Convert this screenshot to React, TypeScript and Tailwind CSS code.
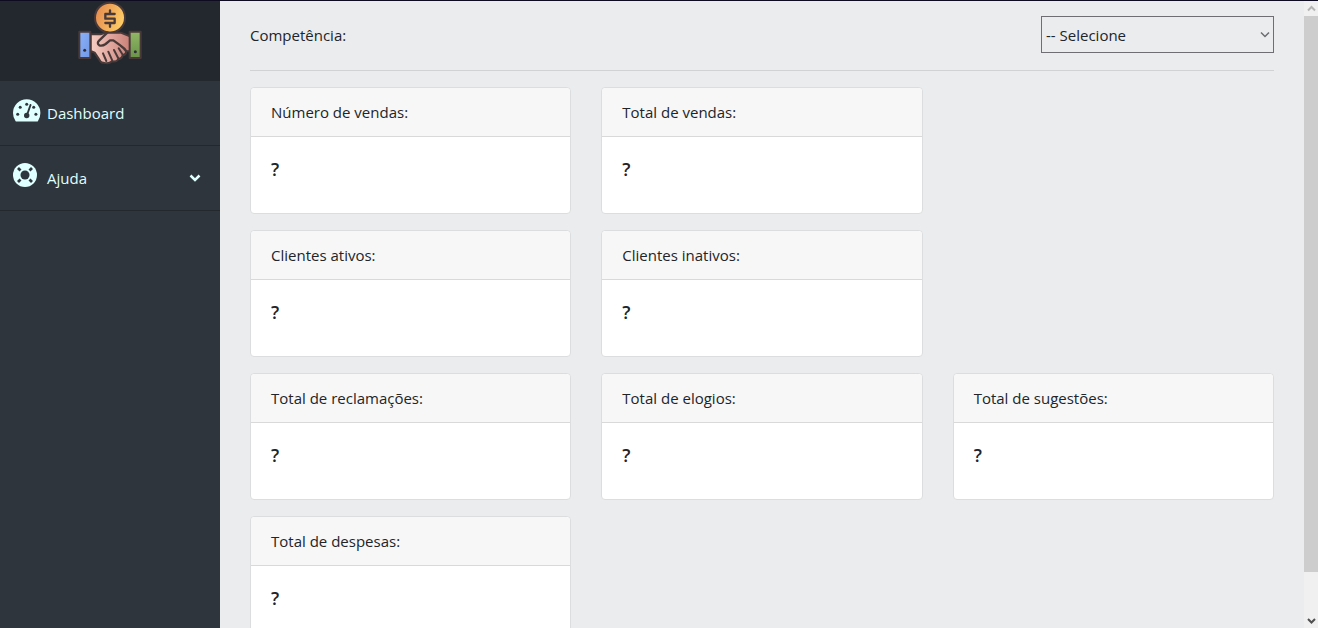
import React from "react";

const cards = [
  { title: "Número de vendas:", place: "col-start-1" },
  { title: "Total de vendas:", place: "col-start-2" },
  { title: "Clientes ativos:", place: "col-start-1" },
  { title: "Clientes inativos:", place: "col-start-2" },
  { title: "Total de reclamações:", place: "col-start-1" },
  { title: "Total de elogios:", place: "col-start-2" },
  { title: "Total de sugestões:", place: "col-start-3" },
  { title: "Total de despesas:", place: "col-start-1" },
];

function Logo() {
  return (
    <svg width="64" height="64" viewBox="6 3 192 192" role="img" aria-label="Vendas" stroke="#493a39" strokeWidth="6" strokeLinecap="round" strokeLinejoin="round">
      <defs>
        <linearGradient id="coin" x1="0" y1="0.3" x2="1" y2="0.7">
          <stop offset="0" stopColor="#e58b50" />
          <stop offset="1" stopColor="#ffd167" />
        </linearGradient>
        <linearGradient id="skin" x1="0" y1="0" x2="1" y2="0">
          <stop offset="0" stopColor="#f8cec5" />
          <stop offset="1" stopColor="#c98078" />
        </linearGradient>
        <linearGradient id="blue" x1="0" y1="0" x2="1" y2="1">
          <stop offset="0" stopColor="#8eb2fa" />
          <stop offset="1" stopColor="#6f97e6" />
        </linearGradient>
        <linearGradient id="green" x1="0" y1="0" x2="0" y2="1">
          <stop offset="0" stopColor="#91b866" />
          <stop offset="1" stopColor="#6a9349" />
        </linearGradient>
      </defs>
      <circle cx="102" cy="53" r="45" fill="url(#coin)" />
      <path d="M116 42H88V56H116V69H88M102 31V40M102 71V80" fill="none" strokeWidth="7" />
      <path d="M44 103H74L90 98H134L162 109V154H151Q150 165 140 166Q138 176 127 178Q120 187 108 184Q98 193 82 188Q74 189 70 179L56 158L44 153Z" fill="url(#skin)" />
      <path d="M94 98L70 121Q61 130 70 136Q79 139 89 132L102 121H112L134 137Q146 145 151 154" fill="none" strokeWidth="7" />
      <path d="M81 160L91 183M97 155L109 182M114 150L128 177M128 145L140 164" fill="none" />
      <rect x="10" y="95" width="33" height="79" fill="url(#blue)" />
      <rect x="161" y="95" width="33" height="79" fill="url(#green)" />
      <circle cx="26" cy="151" r="4.5" fill="#302e3b" stroke="none" />
      <circle cx="178" cy="155" r="4.5" fill="#302e3b" stroke="none" />
    </svg>
  );
}

function GaugeIcon() {
  return (
    <svg width="28" height="24" viewBox="0 0 28 24" aria-hidden="true">
      <path d="M2.500 22Q0 18.500 0 14A13.700 13.700 0 0 1 27.400 14Q27.400 18.500 25 22Q24.700 22.500 24 22.500H3.500Q2.800 22.500 2.500 22Z" fill="currentColor" />
      <g fill="#2f353d">
        <circle cx="4.700" cy="15.300" r="1.500" />
        <circle cx="7.200" cy="8.200" r="1.500" />
        <circle cx="13.700" cy="5.200" r="1.500" />
        <circle cx="20.700" cy="8.200" r="1.500" />
        <circle cx="22.900" cy="15.300" r="1.500" />
        <circle cx="13.700" cy="16.500" r="2.700" />
      </g>
      <path d="M17.500 6L14 16" stroke="#2f353d" strokeWidth="1.900" strokeLinecap="round" />
    </svg>
  );
}

function LifeRingIcon() {
  return (
    <svg width="24" height="24" viewBox="0 0 24 24" aria-hidden="true">
      <circle cx="12" cy="12" r="12" fill="currentColor" />
      <circle cx="12" cy="12" r="4.500" fill="#2f353d" />
      <path d="M5 5L7.500 7.500M19 5L16.500 7.500M5 19L7.500 16.500M19 19L16.500 16.500" stroke="#2f353d" strokeWidth="2.800" />
    </svg>
  );
}

function Sidebar() {
  return (
    <aside className="w-[220px] shrink-0 bg-[#2f353d] text-[#e0ffff]">
      <div className="flex h-20 justify-center bg-[#23282e]">
        <Logo />
      </div>
      <nav>
        <a href="#dashboard" className="flex h-[65px] items-center border-b border-[#23282e] pl-[13px]">
          <span className="w-[34px] pb-1"><GaugeIcon /></span>
          <span>Dashboard</span>
        </a>
        <button type="button" className="flex h-[65px] w-full items-center border-b border-[#23282e] pr-[19px] pl-[13px] text-left">
          <span className="w-[34px] pb-1.5"><LifeRingIcon /></span>
          <span className="flex-1">Ajuda</span>
          <svg width="12" height="12" viewBox="0 0 12 12" fill="none" stroke="currentColor" strokeWidth="2.500" aria-hidden="true">
            <path d="M1.500 3.500L6 8L10.500 3.500" />
          </svg>
        </button>
      </nav>
    </aside>
  );
}

function Card({ title, place }: { title: string; place: string }) {
  return (
    <section className={`rounded border border-[#dcddde] bg-white ${place}`}>
      <h2 className="rounded-t border-b border-[#d9d9d9] bg-[#f7f7f7] px-5 py-3">{title}</h2>
      <p className="px-5 pt-5 pb-8 text-lg leading-6 font-semibold">?</p>
    </section>
  );
}

function ScrollTrack() {
  return (
    <div aria-hidden="true" className="flex w-3.5 shrink-0 flex-col bg-[#f0f0f0]">
      <svg className="h-[15px] w-3.5" viewBox="0 0 14 15" fill="none" stroke="#b5b5b5" strokeWidth="2">
        <path d="M4 9.500L7.500 6L11 9.500" />
      </svg>
      <div className="flex-[556] bg-[#cdcdcd]" />
      <div className="flex-[41]" />
      <svg className="h-[15px] w-3.5" viewBox="0 0 14 15" fill="none" stroke="#505050" strokeWidth="2">
        <path d="M4 6L7.500 9.500L11 6" />
      </svg>
    </div>
  );
}

export default function App() {
  return (
    <div className="flex h-screen overflow-hidden border-t border-[#0e0a1f] bg-[#ebecee] font-['Open_Sans','Noto_Sans',sans-serif] text-[15px] leading-6 text-[#212529]">
      <Sidebar />
      <main className="min-w-0 flex-1 overflow-y-auto px-[30px] pt-[15px] pb-8 [scrollbar-width:none]">
        <div className="flex items-center justify-between border-b border-[#d1d2d4] pb-[17px]">
          <label htmlFor="competencia">Competência:</label>
          <div className="relative w-[233px]">
            <select id="competencia" className="h-[37px] w-full appearance-none border border-[#6f6f73] bg-transparent pl-1">
              <option>-- Selecione</option>
            </select>
            <svg className="pointer-events-none absolute top-3.5 right-1 h-2.5 w-2.5" viewBox="0 0 10 10" fill="none" stroke="#6c6c70" strokeWidth="1.5">
              <path d="M1 2.500L5 6.500L9 2.500" />
            </svg>
          </div>
        </div>
        <div className="mt-4 grid grid-cols-3 gap-x-[30px] gap-y-4">
          {cards.map((card) => (
            <Card key={card.title} {...card} />
          ))}
        </div>
      </main>
      <ScrollTrack />
    </div>
  );
}
